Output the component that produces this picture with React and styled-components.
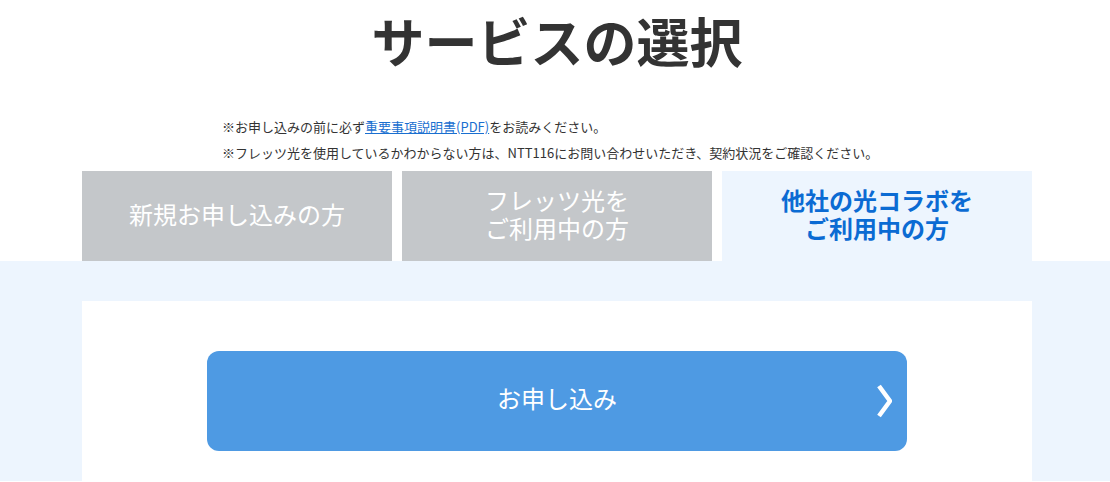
import React from 'react';
import styled, { createGlobalStyle } from 'styled-components';

const GlobalStyle = createGlobalStyle`
  body {
    margin: 0;
    background: #fff;
    font-family: "Noto Sans CJK JP", "Noto Sans", sans-serif;
    color: #333;
  }
`;

const Inner = styled.div`
  width: 954px;
  padding-left: 4px;
  box-sizing: border-box;
  margin: 0 auto;
`;

const Title = styled.h1`
  margin: 0;
  padding-top: 2px;
  text-align: center;
  font-size: 53px;
  line-height: 76px;
  font-weight: 700;
  color: #333;
`;

const Notes = styled.ul`
  list-style: none;
  margin: 0;
  padding: 36px 0 0 140px;
`;

const Note = styled.li`
  font-size: 13px;
  line-height: 26px;
  color: #333;
`;

const Link = styled.a`
  color: #1a6fd0;
  text-decoration: underline;
`;

const Tabs = styled.div`
  display: grid;
  grid-template-columns: repeat(3, 310px);
  gap: 10px;
  margin-top: 5px;
`;

const Tab = styled.div`
  height: 90px;
  box-sizing: border-box;
  padding-bottom: 5px;
  display: flex;
  align-items: center;
  justify-content: center;
  text-align: center;
  font-size: 24px;
  line-height: 28px;
  background: ${(p) => (p.$active ? '#edf5fe' : '#c4c7ca')};
  color: ${(p) => (p.$active ? '#0b6bd3' : '#fff')};
  font-weight: ${(p) => (p.$active ? 700 : 400)};
`;

const Panel = styled.div`
  background: #edf5fe;
  padding-top: 40px;
`;

const Card = styled.div`
  background: #fff;
  padding: 50px 125px 30px;
`;

const ApplyButton = styled.a`
  position: relative;
  display: flex;
  align-items: center;
  justify-content: center;
  height: 100px;
  box-sizing: border-box;
  padding-bottom: 7px;
  border-radius: 12px;
  background: #4e9ae3;
  color: #fff;
  font-size: 24px;
  text-decoration: none;
`;

const Chevron = styled.svg`
  position: absolute;
  right: 15px;
  top: 50%;
  transform: translateY(-50%);
`;

export default function App() {
  return (
    <>
      <GlobalStyle />
      <Inner>
        <Title>サービスの選択</Title>
        <Notes>
          <Note>
            ※お申し込みの前に必ず<Link href="#">重要事項説明書(PDF)</Link>をお読みください。
          </Note>
          <Note>※フレッツ光を使用しているかわからない方は、NTT116にお問い合わせいただき、契約状況をご確認ください。</Note>
        </Notes>
        <Tabs>
          <Tab>新規お申し込みの方</Tab>
          <Tab>
            フレッツ光を
            <br />
            ご利用中の方
          </Tab>
          <Tab $active>
            他社の光コラボを
            <br />
            ご利用中の方
          </Tab>
        </Tabs>
      </Inner>
      <Panel>
        <Inner>
          <Card>
            <ApplyButton href="#">
              お申し込み
              <Chevron width="16" height="34" viewBox="0 0 16 34">
                <polyline points="3,2 14,17 3,32" fill="none" stroke="#fff" strokeWidth="4.5" />
              </Chevron>
            </ApplyButton>
          </Card>
        </Inner>
      </Panel>
    </>
  );
}
